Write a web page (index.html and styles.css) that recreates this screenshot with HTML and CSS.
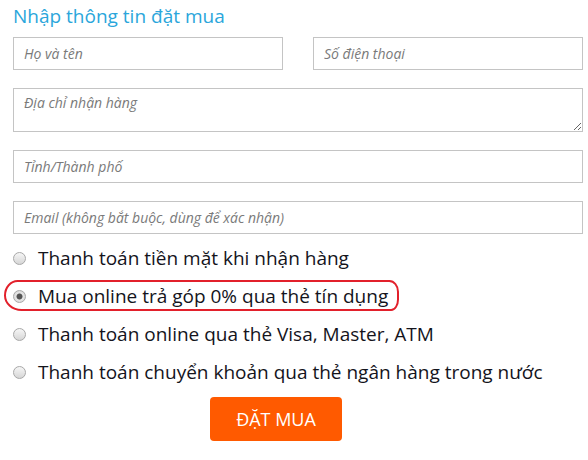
FILE: index.html
```html
<!DOCTYPE html>
<html lang="vi">
<head>
  <meta charset="UTF-8" />
  <meta name="viewport" content="width=device-width, initial-scale=1.0" />
  <title>Nhập thông tin đặt mua</title>
  <link rel="stylesheet" href="styles.css">
</head>

<body>
  <div class="order">
    <h2>Nhập thông tin đặt mua</h2>
    <form class="order-form">
      <div class="row">
        <input type="text" placeholder="Họ và tên">
        <input type="text" placeholder="Số điện thoại">
      </div>
      <textarea placeholder="Địa chỉ nhận hàng"></textarea>
      <input type="text" placeholder="Tỉnh/Thành phố">
      <input type="text" placeholder="Email (không bắt buộc, dùng để xác nhận)">

      <div class="payments">
        <label class="option"><span class="radio"></span>Thanh toán tiền mặt khi nhận hàng</label>
        <label class="option marked"><span class="radio checked"></span>Mua online trả góp 0% qua thẻ tín dụng</label>
        <label class="option"><span class="radio"></span>Thanh toán online qua thẻ Visa, Master, ATM</label>
        <label class="option"><span class="radio"></span>Thanh toán chuyển khoản qua thẻ ngân hàng trong nước</label>
      </div>

      <div class="actions">
        <button type="button">ĐẶT MUA</button>
      </div>
    </form>
  </div>
</body>
</html>
```

FILE: styles.css
```css
body {
  margin: 0;
  font-family: 'Open Sans', sans-serif;
  background: #ffffff;
}

.order {
  width: 570px;
  padding: 0 0 0 13px;
}

h2 {
  margin: 0;
  padding-top: 3px;
  font-size: 19px;
  font-weight: 400;
  line-height: 26px;
  color: #2ba6db;
}

.order-form {
  display: flex;
  flex-direction: column;
  gap: 18px;
  margin-top: 8px;
}

.row {
  display: flex;
  gap: 30px;
}

input, textarea {
  box-sizing: border-box;
  width: 100%;
  height: 33px;
  margin: 0;
  padding: 0 10px;
  border: 1px solid #c4c4c4;
  border-radius: 0;
  font-family: 'Open Sans', sans-serif;
  font-size: 14px;
  background: #fff;
}

textarea {
  height: 44px;
  padding-top: 4px;
  resize: vertical;
}

input::placeholder, textarea::placeholder {
  font-style: italic;
  color: #7a7a7a;
}

.payments {
  display: flex;
  flex-direction: column;
  margin-top: -13px;
}

.option {
  position: relative;
  display: flex;
  align-items: center;
  height: 38px;
  font-size: 19px;
  color: #14141c;
}

.radio {
  box-sizing: border-box;
  width: 13px;
  height: 13px;
  margin: 0 12px 0 0;
  border: 1px solid #a8a8a8;
  border-radius: 50%;
  background: linear-gradient(#f6f6f6, #d6d6d6);
  flex-shrink: 0;
}

.radio.checked {
  background: radial-gradient(circle, #555 0 2.6px, #e6e6e6 3.4px, #d0d0d0 100%);
}

/* hand-drawn highlight around the chosen option */
.marked::after {
  content: "";
  position: absolute;
  left: -9px;
  top: 3px;
  width: 391px;
  height: 27px;
  border: 2.5px solid #e2202b;
  border-radius: 14px 10px 8px 18px / 16px 12px 12px 16px;
}

.actions {
  display: flex;
  padding-left: 197px;
  margin-top: -12px;
}

button {
  width: 132px;
  height: 44px;
  border: none;
  border-radius: 4px;
  background: #ff5a00;
  color: #fff;
  font-family: 'Open Sans', sans-serif;
  font-size: 18px;
  cursor: pointer;
}
```
